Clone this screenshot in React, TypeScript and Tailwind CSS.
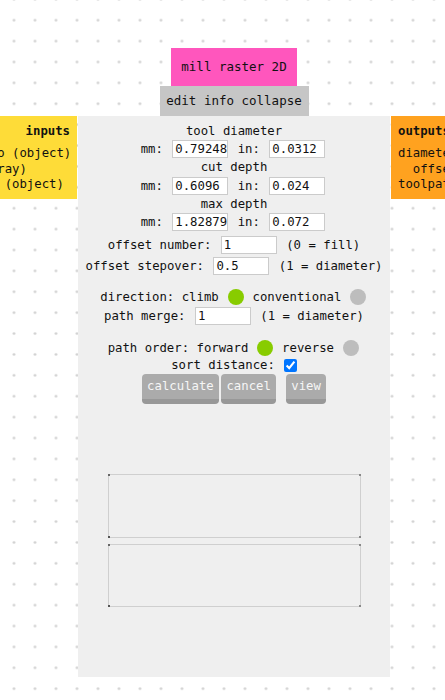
import React from "react";

const inputCls =
  "w-[56px] h-[18px] mx-[2px] pl-[2px] pr-0 bg-white border border-[#cbcbcb] text-[12.3px] text-[#111] outline-none font-['DejaVu_Sans_Mono',monospace]";

function Field({ v, w }: { v: string; w?: string }) {
  return <input readOnly value={v} className={inputCls + (w ? " " + w : "")} />;
}

function Dot({ on }: { on?: boolean }) {
  return (
    <span
      className={
        "inline-block w-[16px] h-[16px] rounded-full mx-[1.5px] shrink-0 " +
        (on ? "bg-[#88cc00]" : "bg-[#bdbdbd]")
      }
    />
  );
}

function Btn({ children, cls }: { children: React.ReactNode; cls?: string }) {
  return (
    <button
      className={
        "h-[30px] px-[5px] bg-[#ababab] text-[#f6f6f6] rounded-[4px] border-b-[5px] border-[#989898] text-[12.3px] leading-none font-['DejaVu_Sans_Mono',monospace] " +
        (cls || "")
      }
    >
      {children}
    </button>
  );
}

function Canvas({ h }: { h: number }) {
  return (
    <svg width="253" height={h} className="block">
      <rect x="0.5" y="0.5" width="252" height={h - 1} fill="#efefef" stroke="#cfcfcf" />
      <rect x="0" y="0" width="2" height="2" fill="#666" />
      <rect x="251" y="0" width="2" height="2" fill="#888" />
      <rect x="0" y={h - 2} width="2" height="2" fill="#555" />
      <rect x="251" y={h - 2} width="2" height="2" fill="#888" />
    </svg>
  );
}

export default function App() {
  const row = "flex items-center justify-center whitespace-pre";
  return (
    <div className="relative w-[445px] h-[700px] overflow-hidden bg-white bg-[radial-gradient(circle,#cfcfcf_0.9px,transparent_1.6px)] bg-[length:21px_20.9px] bg-[position:3.5px_9.75px] text-[12.3px] text-[#111] font-['DejaVu_Sans_Mono',monospace]">
      <div className="flex flex-col pt-[48px]">
        <div className="flex flex-col items-center ml-[78px] w-[312px]">
          <div className="w-[126px] h-[38px] bg-[#ff56bd] flex items-center justify-center text-[12.5px]">
            mill raster 2D
          </div>
          <div className="w-[149px] h-[30px] bg-[#c6c6c6] flex items-center justify-center text-[12.5px]">
            edit info collapse
          </div>
        </div>
        <div className="flex items-start">
          {/* inputs */}
          <div className="shrink-0 w-[147px] -ml-[70px] bg-[#fedc38] pt-[5px] pb-[6px] pl-[8px] pr-[7px]">
            <div className="h-[20px] leading-[20px] text-right font-bold">inputs</div>
            <div className="mt-[5px] leading-[15.5px] whitespace-pre">
              <div>imageInfo (object)</div>
              <div>path (array)</div>
              <div>settings (object)</div>
            </div>
          </div>

          {/* main panel */}
          <div className="shrink-0 w-[312px] h-[561px] ml-[1px] bg-[#efefef] pt-[6px] flex flex-col">
            <div className={row + " h-[18px]"}>tool diameter</div>
            <div className={row + " h-[18px]"}>
              <span>mm: </span>
              <Field v="0.79248" />
              <span> in: </span>
              <Field v="0.0312" />
            </div>
            <div className={row + " h-[19px]"}>cut depth</div>
            <div className={row + " h-[18px]"}>
              <span>mm: </span>
              <Field v="0.6096" />
              <span> in: </span>
              <Field v="0.024" />
            </div>
            <div className={row + " h-[18px]"}>max depth</div>
            <div className={row + " h-[18.5px]"}>
              <span>mm: </span>
              <Field v="1.8287999999999998" />
              <span> in: </span>
              <Field v="0.072" />
            </div>
            <div className={row + " h-[18.5px] mt-[4px]"}>
              <span>offset number: </span>
              <Field v="1" />
              <span> (0 = fill)</span>
            </div>
            <div className={row + " h-[18.5px] mt-[2.5px]"}>
              <span>offset stepover: </span>
              <Field v="0.5" />
              <span> (1 = diameter)</span>
            </div>
            <div className={row + " h-[18px] mt-[13px]"}>
              <span>direction: climb </span>
              <Dot on />
              <span> conventional </span>
              <Dot />
            </div>
            <div className={row + " h-[18.5px] mt-[0.5px]"}>
              <span>path merge: </span>
              <Field v="1" />
              <span> (1 = diameter)</span>
            </div>
            <div className={row + " h-[18px] mt-[14px]"}>
              <span>path order: forward </span>
              <Dot on />
              <span> reverse </span>
              <Dot />
            </div>
            <div className={row + " h-[17px]"}>
              <span>sort distance: </span>
              <input
                type="checkbox"
                defaultChecked
                className="w-[13px] h-[13px] m-0 ml-[1.5px] accent-[#0075ff]"
              />
            </div>
            <div className="flex items-start justify-center h-[30px]">
              <Btn>calculate</Btn>
              <Btn cls="ml-[2.7px]">cancel</Btn>
              <Btn cls="ml-[10.4px]">view</Btn>
            </div>
            <div className="flex flex-col items-center mt-[70px]">
              <Canvas h={64} />
              <div className="mt-[6px]">
                <Canvas h={63} />
              </div>
            </div>
          </div>

          {/* outputs */}
          <div className="shrink-0 w-[147px] ml-[1px] bg-[#ffa21f] pt-[5px] pb-[6px] pl-[7px]">
            <div className="h-[20px] leading-[20px] font-bold">outputs</div>
            <div className="mt-[5px] leading-[15.5px] whitespace-pre inline-block text-right">
              <div>diameter (number)</div>
              <div>offset (number)</div>
              <div>toolpath (object)</div>
            </div>
          </div>
        </div>
      </div>
    </div>
  );
}
